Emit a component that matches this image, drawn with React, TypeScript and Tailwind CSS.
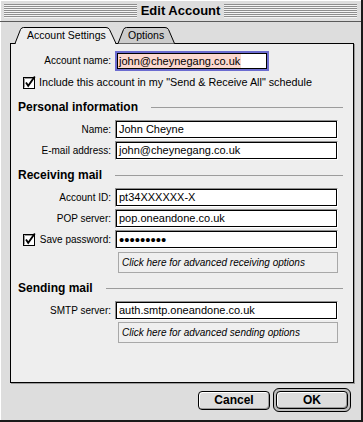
import type { ReactNode } from 'react';

const stripes =
  'h-[14px] flex-1 bg-[repeating-linear-gradient(to_bottom,#8e8e8e_0px,#8e8e8e_1px,#f4f4f4_1px,#f4f4f4_2px)]';

function CheckBox() {
  return (
    <svg width="13" height="13" viewBox="0 0 13 13" className="shrink-0">
      <rect x="0.5" y="1.5" width="11" height="11" fill="#ffffff" stroke="#000000" />
      <path d="M1.5 2.5 H10.5 M1.5 2.5 V11.5" stroke="#9a9a9a" />
      <path d="M3 6.5 L5.2 9.8 L11.8 0.6" stroke="#000000" strokeWidth="1.8" fill="none" />
    </svg>
  );
}

function Label({ children }: { children: ReactNode }) {
  return <div className="w-[100px] text-right text-[10px] leading-none">{children}</div>;
}

function Field({ children }: { children: ReactNode }) {
  return (
    <div className="ml-[4px] h-[19px] w-[223px] border border-t-[#8f8f8f] border-l-[#8f8f8f] border-r-white border-b-white">
      <div className="flex h-full items-center border border-black bg-white pl-[2px] text-[11px] leading-none">
        {children}
      </div>
    </div>
  );
}

function Row({ label, value, className }: { label: ReactNode; value: ReactNode; className: string }) {
  return (
    <div className={`flex h-[19px] items-center ${className}`}>
      <Label>{label}</Label>
      <Field>{value}</Field>
    </div>
  );
}

function Heading({ title, className }: { title: string; className: string }) {
  return (
    <div className={`flex h-[14px] items-center pl-[7px] pr-[10px] ${className}`}>
      <span className="text-[12px] font-bold leading-none">{title}</span>
      <div className="ml-[13px] h-px flex-1 bg-[#9c9c9c]" />
    </div>
  );
}

function Advanced({ text, className }: { text: string; className: string }) {
  return (
    <div
      className={`ml-[107px] flex h-[21px] w-[220px] items-center border border-[#a8a8a8] bg-[#efefef] pl-[3px] text-[10px] italic leading-none ${className}`}
    >
      {text}
    </div>
  );
}

export default function App() {
  return (
    <div className="flex h-[422px] w-[363px] flex-col border-b-2 border-r-2 border-[#1a1a1a] bg-[#dddddd] font-['Liberation_Sans',Arial,sans-serif] text-black shadow-[inset_1px_1px_0_#ffffff]">
      {/* title bar */}
      <div className="flex h-[22px] items-center border-b border-[#5a5a5a] px-[4px]">
        <div className={stripes} />
        <div className="px-[4px] text-[13px] font-bold leading-none">Edit Account</div>
        <div className={stripes} />
      </div>

      {/* tabs */}
      <div className="relative z-10 ml-[10px] mt-[5px] h-[16px] w-[344px]">
        <svg width="344" height="17" viewBox="0 0 344 17" className="absolute left-0 top-0 overflow-visible">
          <path
            d="M108 16.5 L113.5 2.5 Q114.5 0.5 116.5 0.5 H155 Q157.5 0.5 158.5 2.5 L164.5 16.5"
            fill="#cccccc"
            stroke="#000000"
          />
          <path
            d="M5 16.5 L10.5 2.5 Q11.5 0.5 13.5 0.5 H96 Q98.5 0.5 99.5 2.5 L106 16.5 Z"
            fill="#eeeeee"
            stroke="none"
          />
          <path
            d="M5 16.5 L10.5 2.5 Q11.5 0.5 13.5 0.5 H96 Q98.5 0.5 99.5 2.5 L106 16.5"
            fill="none"
            stroke="#000000"
          />
          <rect x="6" y="16" width="99" height="1" fill="#eeeeee" />
        </svg>
        <div className="relative flex h-full items-center text-[10.5px] leading-none">
          <span className="w-[118px] pl-[17px]">Account Settings</span>
          <span>Options</span>
        </div>
      </div>

      {/* panel */}
      <div className="ml-[10px] flex h-[340px] w-[344px] flex-col border border-black bg-[#eeeeee] shadow-[1px_1px_0_#9a9a9a]">
        <div className="mt-[7px] flex h-[20px] items-center">
          <Label>Account name:</Label>
          <div className="ml-[4px] h-[20px] w-[154px] border-2 border-[#6c6cd0]">
            <div className="flex h-full items-stretch border border-black bg-white text-[11px] leading-none">
              <span className="flex items-center bg-[#fbd8cf] pl-[1px] pr-[1px]">john@cheynegang.co.uk</span>
            </div>
          </div>
        </div>

        <div className="mt-[4px] flex h-[14px] items-center gap-[3px] pl-[12px]">
          <CheckBox />
          <span className="text-[10.8px] leading-none">Include this account in my "Send &amp; Receive All" schedule</span>
        </div>

        <Heading title="Personal information" className="mt-[11px]" />
        <Row label="Name:" value="John Cheyne" className="mt-[6px]" />
        <Row label="E-mail address:" value="john@cheynegang.co.uk" className="mt-[2px]" />

        <Heading title="Receiving mail" className="mt-[8px]" />
        <Row label="Account ID:" value="pt34XXXXXX-X" className="mt-[6px]" />
        <Row label="POP server:" value="pop.oneandone.co.uk" className="mt-[2px]" />
        <div className="mt-[2px] flex h-[19px] items-center">
          <div className="flex w-[100px] items-center pl-[12px]">
            <CheckBox />
            <span className="ml-auto text-[10px] leading-none">Save password:</span>
          </div>
          <Field>
            <span className="text-[15px] leading-none">•••••••••</span>
          </Field>
        </div>
        <Advanced text="Click here for advanced receiving options" className="mt-[3px]" />

        <Heading title="Sending mail" className="mt-[8px]" />
        <Row label="SMTP server:" value="auth.smtp.oneandone.co.uk" className="mt-[6px]" />
        <Advanced text="Click here for advanced sending options" className="mt-[2px]" />
      </div>

      {/* buttons */}
      <div className="mt-[5px] flex h-[24px] items-center justify-end gap-[3px] pr-[10px]">
        <button className="flex h-[19px] w-[72px] items-center justify-center rounded-[4px] border border-black bg-[#dddddd] text-[12px] font-bold leading-none shadow-[inset_1px_1px_0_#ffffff,inset_-1px_-1px_0_#9a9a9a]">
          Cancel
        </button>
        <div className="flex h-[24px] w-[78px] rounded-[6px] border border-black bg-[#bdbdbd] p-[2px]">
          <button className="flex flex-1 items-center justify-center rounded-[4px] border border-black bg-[#dddddd] text-[12px] font-bold leading-none shadow-[inset_1px_1px_0_#ffffff,inset_-1px_-1px_0_#9a9a9a]">
            OK
          </button>
        </div>
      </div>
    </div>
  );
}
